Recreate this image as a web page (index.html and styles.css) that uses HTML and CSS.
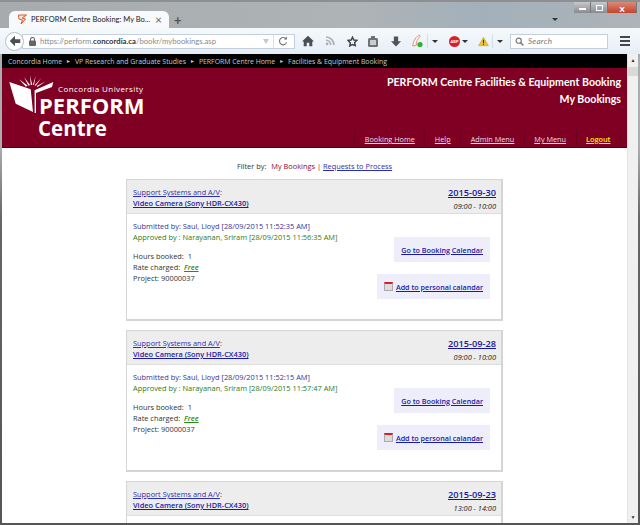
FILE: index.html
```html
<!DOCTYPE html>
<html lang="en">
<head>
<meta charset="utf-8">
<title>PERFORM Centre Booking</title>
<link rel="stylesheet" href="styles.css">
</head>
<body>
<div class="window">
  <div class="titlebar">
    <div class="tab">
      <svg class="favicon" width="9" height="11" viewBox="0 0 9 11"><path d="M.5 1h8L4 4l3.500 1L3 10l1.500-4L1 5z" fill="#fbe9d8" stroke="#d9562b" stroke-width="1"/></svg>
      <span class="tab-title">PERFORM Centre Booking: My Bo...</span>
      <span class="tab-close">×</span>
    </div>
    <span class="newtab">+</span>
    <span class="tabs-arrow"></span>
    <div class="winbtns">
      <span class="winbtn"><i class="min"></i></span>
      <span class="winbtn"><i class="max"></i></span>
      <span class="winbtn close">x</span>
    </div>
  </div>
  <div class="navbar">
    <span class="back">
      <svg width="12" height="12" viewBox="0 0 16 16"><path d="M8 1 1 8l7 7v-4.500h7v-5H8z" fill="#4a4f57"/></svg>
    </span>
    <div class="urlbar">
      <svg width="7" height="9" viewBox="0 0 7 9"><rect y="3.500" width="7" height="5.500" rx="1" fill="#666"/><path d="M1.500 4V2.500a2 2 0 0 1 4 0V4" fill="none" stroke="#666" stroke-width="1.100"/></svg>
      <span class="url">https://perform.<b>concordia.ca</b>/bookr/mybookings.asp</span>
      <span class="url-drop"></span>
      <span class="url-sep"></span>
      <svg width="10" height="10" viewBox="0 0 11 11"><path d="M9 3.500A4 4 0 1 0 9.400 7" fill="none" stroke="#777" stroke-width="1.300"/><path d="M6.500 3.800h3.300V.5z" fill="#777"/></svg>
    </div>
    <svg class="tool t-home" width="12" height="12" viewBox="0 0 14 14"><path d="M7 1 0 7.500h2V13h3.500V9h3v4H12V7.500h2z" fill="#4a4f57"/></svg>
    <svg class="tool t-rss" width="10" height="10" viewBox="0 0 14 14"><circle cx="3" cy="11" r="2" fill="#a9adb2"/><path d="M1.500 6A6.500 6.500 0 0 1 8 12.500M1.500 1.500a11 11 0 0 1 11 11" fill="none" stroke="#a9adb2" stroke-width="2.200"/></svg>
    <svg class="tool t-star" width="11" height="11" viewBox="0 0 14 14"><path d="m7 1.500 1.700 3.600 3.900.5-2.900 2.700.8 3.900L7 10.800l-3.500 1.900.8-3.900L1.400 5.600l3.900-.5z" fill="none" stroke="#3d4249" stroke-width="1.800"/></svg>
    <svg class="tool t-clip" width="10" height="11" viewBox="0 0 10 11"><rect y="2" width="10" height="9" rx="1.500" fill="#6d7277"/><rect x="2" y="4" width="6" height="5" fill="#c9cdd0"/><rect x="3" width="4" height="3" fill="#6d7277"/></svg>
    <svg class="tool t-down" width="10" height="11" viewBox="0 0 14 14"><path d="M4 0h6v6.500h4L7 14 0 6.500h4z" fill="#4f545b"/></svg>
    <svg class="tool t-leaf" width="11" height="14" viewBox="0 0 11 14"><path d="M7.500 1C4.500 2 1 7 .8 12l3.700-.8C3.500 8.500 6 4.500 8 2.500z" fill="#fff3ef" stroke="#e8907c" stroke-width="1"/><circle cx="8" cy="10.500" r="2.600" fill="#27b52f"/></svg>
    <span class="sep"></span>
    <span class="drop d-leaf"></span>
    <span class="abp">ABP</span>
    <span class="drop d-abp"></span>
    <svg class="tool t-warn" width="11" height="11" viewBox="0 0 16 14"><path d="M8 1 15 13H1z" fill="#f4c430" stroke="#c9a227"/><rect x="7.200" y="4.500" width="1.600" height="5" fill="#333"/><rect x="7.200" y="10.300" width="1.600" height="1.600" fill="#333"/></svg>
    <span class="sep s-warn"></span>
    <span class="drop d-warn"></span>
    <div class="search">
      <svg width="9" height="9" viewBox="0 0 11 11"><circle cx="4.500" cy="4.500" r="3.200" fill="none" stroke="#777" stroke-width="1.400"/><path d="m7 7 3.300 3.300" stroke="#777" stroke-width="1.800"/></svg>
      <span>Search</span>
    </div>
    <span class="burger"><i></i><i></i><i></i></span>
  </div>
  <div class="viewport">
    <div class="page">
      <div class="crumbs">
        <span>Concordia Home</span><span class="arr">►</span><span>VP Research and Graduate Studies</span><span class="arr">►</span><span>PERFORM Centre Home</span><span class="arr">►</span><span>Facilities &amp; Equipment Booking</span>
      </div>
      <header class="banner">
        <div class="logo">
          <svg class="logo-mark" width="46" height="40" viewBox="0 0 46 40">
            <path d="M1.300 8 22.700 15.300 25 38 7.700 29.700z" fill="#fff"/>
            <path d="M26.600 16.300 45.300 8 44 13 28 19V39h-1.400z" fill="#fff"/>
            <path d="M11 5.300 19.500 11.500 18 12.800zM16 3 22 11 20.500 11.800zM22 1.300 24.200 10.800 22.800 11zM27.700 2 26 11 24.900 10.800zM33.300 4 27.800 11.800 26.700 11.200zM37.700 7.300 29.500 13 28.800 12z" fill="#fff"/>
          </svg>
          <div class="logo-text">
            <div class="uni">Concordia University</div>
            <div class="perform">PERFORM</div>
            <div class="centre">Centre</div>
          </div>
        </div>
        <div class="banner-right">
          <h1>PERFORM Centre Facilities &amp; Equipment Booking</h1>
          <h2>My Bookings</h2>
          <nav class="menu">
            <a>Booking Home</a><a>Help</a><a>Admin Menu</a><a>My Menu</a><a class="logout">Logout</a>
          </nav>
        </div>
      </header>
      <p class="filter">Filter by: <span class="current">My Bookings</span> <span class="pipe">|</span> <a>Requests to Process</a></p>

      <section class="card">
        <div class="card-head">
          <div class="res"><a>Support Systems and A/V</a>:<br><a class="strong">Video Camera (Sony HDR-CX430)</a></div>
          <div class="when"><a>2015-09-30</a><em>09:00 - 10:00</em></div>
        </div>
        <div class="card-body">
          <div class="info">
            <div class="sub">Submitted by: Saul, Lloyd [28/09/2015 11:52:35 AM]</div>
            <div class="app">Approved by : Narayanan, Sriram [28/09/2015 11:56:35 AM]</div>
            <div class="meta">Hours booked:&nbsp; 1</div>
            <div>Rate charged:&nbsp; <a class="free">Free</a></div>
            <div>Project: 90000037</div>
          </div>
          <div class="actions">
            <a class="act">Go to Booking Calendar</a>
            <a class="act"><span class="cal"></span>Add to personal calandar</a>
          </div>
        </div>
      </section>

      <section class="card">
        <div class="card-head">
          <div class="res"><a>Support Systems and A/V</a>:<br><a class="strong">Video Camera (Sony HDR-CX430)</a></div>
          <div class="when"><a>2015-09-28</a><em>09:00 - 10:00</em></div>
        </div>
        <div class="card-body">
          <div class="info">
            <div class="sub">Submitted by: Saul, Lloyd [28/09/2015 11:52:15 AM]</div>
            <div class="app">Approved by : Narayanan, Sriram [28/09/2015 11:57:47 AM]</div>
            <div class="meta">Hours booked:&nbsp; 1</div>
            <div>Rate charged:&nbsp; <a class="free">Free</a></div>
            <div>Project: 90000037</div>
          </div>
          <div class="actions">
            <a class="act">Go to Booking Calendar</a>
            <a class="act"><span class="cal"></span>Add to personal calandar</a>
          </div>
        </div>
      </section>

      <section class="card">
        <div class="card-head">
          <div class="res"><a>Support Systems and A/V</a>:<br><a class="strong">Video Camera (Sony HDR-CX430)</a></div>
          <div class="when"><a>2015-09-23</a><em>13:00 - 14:00</em></div>
        </div>
      </section>
    </div>
    <div class="scrollbar">
      <span class="sb-btn">▲</span>
      <span class="sb-thumb"></span>
      <span class="sb-btn sb-end">▼</span>
    </div>
  </div>
</div>
</body>
</html>
```
FILE: styles.css
```css
* { box-sizing: border-box; }
html, body { margin: 0; height: 100%; overflow: hidden; }
body { background: #555; font-family: Lato, "Open Sans", sans-serif; }
a { cursor: pointer; }
.window { width: 640px; height: 525px; display: flex; flex-direction: column; border-top: 2px solid #8d9092; background: #a7adb1; }
.titlebar { height: 26px; padding: 9px 0 0 9px; display: flex; align-items: flex-start; position: relative; flex: none; background: linear-gradient(90deg, #a7abad, #aeb3b6 55%, #a3b0ba 75%, #adb3b8); }
.tab { width: 160px; height: 17px; background: #f7f9fb; border-radius: 6px 6px 0 0; display: flex; align-items: center; padding: 0 7px 0 9px; font-size: 7.500px; color: #222; flex: none; }
.favicon { flex: none; margin-right: 4px; }
.tab-title { flex: 1; white-space: nowrap; overflow: hidden; }
.tab-close { font-size: 12px; color: #666; line-height: 1; }
.newtab { margin-left: 5px; font-size: 13px; line-height: 18px; font-weight: 700; color: #555; }
.tabs-arrow { position: absolute; left: 552px; top: 16px; border: 3px solid transparent; border-top: 3px solid #333; border-bottom: 0; }
.winbtns { position: absolute; top: 0; right: 3px; display: flex; height: 11px; }
.winbtn { width: 17px; height: 11px; background: linear-gradient(#c5c9cc, #888c90); border-right: 1px solid #777; display: flex; align-items: center; justify-content: center; }
.winbtn .min { width: 7px; height: 2px; background: #fff; margin-top: 3px; }
.winbtn .max { width: 7px; height: 6px; border: 1px solid #fff; }
.winbtn.close { width: 29px; background: linear-gradient(#d98a78, #c4432c); color: #fff; font-size: 10px; font-weight: 700; line-height: 1; }
.navbar { height: 26px; flex: none; background: linear-gradient(#f5f9fc, #e6eef5); display: flex; align-items: center; padding: 0 0 0 5px; }
.back { width: 19px; height: 19px; border-radius: 50%; background: #fff; border: 1px solid #b6c0ca; display: flex; align-items: center; justify-content: center; flex: none; position: relative; z-index: 1; }
.urlbar { width: 273px; height: 15px; margin-left: -2px; background: #fff; border: 1px solid #c3d0dc; display: flex; align-items: center; padding: 0 6px 0 6px; flex: none; }
.url { margin-left: 4px; flex: 1; font-size: 7.700px; color: #8b8b8b; white-space: nowrap; }
.url b { color: #333; font-weight: 700; }
.url-drop { border: 3px solid transparent; border-top: 5px solid #c5c8cb; border-bottom: 0; margin-right: 4px; }
.url-sep { width: 1px; height: 13px; background: #dcdfe2; margin-right: 4px; }
.tool { flex: none; }
.t-home { margin-left: 7px; }
.t-rss { margin-left: 11px; }
.t-star { margin-left: 12px; }
.t-clip { margin-left: 10px; }
.t-down { margin-left: 13px; }
.t-leaf { margin-left: 11px; }
.sep { width: 1px; height: 14px; background: #d4dde5; margin-left: 4px; flex: none; }
.drop { border: 3px solid transparent; border-top: 3px solid #333; border-bottom: 0; flex: none; }
.d-leaf { margin-left: 4px; }
.abp { width: 11px; height: 11px; margin-left: 11px; background: #d7202a; border-radius: 50%; color: #fff; font-size: 4px; font-weight: 700; line-height: 11px; text-align: center; flex: none; }
.d-abp { margin-left: 2px; }
.t-warn { margin-left: 10px; }
.s-warn { margin-left: 3px; }
.d-warn { margin-left: 4px; }
.search { width: 98px; height: 15px; margin-left: 7px; background: #fff; border: 1px solid #c3d0dc; display: flex; align-items: center; padding-left: 4px; gap: 4px; font-size: 8px; letter-spacing: .3px; font-style: italic; color: #777; flex: none; }
.burger { margin-left: 12px; width: 10px; display: flex; flex-direction: column; gap: 2px; flex: none; }
.burger i { height: 2px; background: #42474d; }
.viewport { flex: 1; display: flex; padding: 0 2px 2px 2px; min-height: 0; overflow: hidden; background: linear-gradient(#a9adb0 20%, #666 35%, #555); }
.page { flex: 1; min-width: 0; background: #fff; font-family: "Open Sans", "Noto Sans", sans-serif; font-size: 7.400px; color: #333; overflow: hidden; }
.crumbs { height: 14px; background: #000; color: #c8c8c8; display: flex; align-items: center; padding-left: 6px; font-size: 6.900px; white-space: nowrap; gap: 4px; }
.arr { font-size: 5px; }
.banner { height: 80px; background: #7f0022; display: flex; justify-content: space-between; border-bottom: 1px solid #400012; }
.logo { position: relative; margin: 6px 0 0 6px; color: #fff; width: 140px; flex: none; }
.logo-mark { position: absolute; left: 0; top: 0; }
.logo-text { padding-left: 31px; }
.uni { font-size: 8px; letter-spacing: .4px; padding: 9px 0 0 19px; line-height: 11px; white-space: nowrap; }
.perform { font-size: 22px; font-weight: 700; line-height: 21px; white-space: nowrap; margin-top: 1px; }
.centre { font-size: 20.500px; font-weight: 700; line-height: 21px; margin-top: 1.500px; margin-left: -1px; }
.banner-right { padding: 6px 6px 0 0; text-align: right; color: #fff; display: flex; flex-direction: column; align-items: flex-end; }
h1, h2 { margin: 0; font-family: Lato, "Open Sans", sans-serif; font-size: 10.600px; font-weight: 700; line-height: 16.500px; white-space: nowrap; }
.menu { margin-top: 23px; display: flex; font-size: 7.300px; }
.menu a { color: #f3dfe4; text-decoration: underline; padding: 0 9.500px; line-height: 18px; border-left: 1px solid #6d001c; white-space: nowrap; }
.menu .logout { color: #ffee00; font-weight: 600; border-right: 1px solid #6d001c; }
.filter { margin: 12px 0 7px; text-align: center; font-size: 7.400px; line-height: 12px; color: #333; }
.filter .current { color: #8a1034; margin-left: 3px; }
.filter .pipe { color: #8a1034; }
.filter a { color: #2d2db3; text-decoration: underline; }
.card { width: 377px; margin: 0 0 9px 124px; height: 142px; border: 1px solid #d5d5d5; border-right-width: 2px; border-bottom-width: 2px; background: #fff; }
.card-head { height: 34px; background: #ededed; border-bottom: 1px solid #ddd; display: flex; justify-content: space-between; padding: 6px 5px 0 6px; }
.res { line-height: 11px; color: #333; margin-top: 1px; }
.res a { color: #2d2db3; text-decoration: underline; }
.res .strong { font-weight: 600; color: #1a1aa8; }
.when { text-align: right; }
.when a { display: block; font-size: 9.200px; font-weight: 600; color: #15159f; text-decoration: underline; line-height: 13px; }
.when em { display: block; margin-top: 1px; font-size: 7.400px; line-height: 12px; color: #222; }
.card-body { display: flex; justify-content: space-between; padding: 7px 11px 0 6px; }
.info { line-height: 10.700px; white-space: nowrap; color: #333; }
.sub { color: #33338f; }
.app { color: #2c7a16; }
.meta { margin-top: 9px; }
.free { color: #2c8a16; font-style: italic; font-weight: 600; text-decoration: underline; }
.actions { display: flex; flex-direction: column; align-items: flex-end; gap: 12px; padding-top: 16px; }
.act { height: 25px; padding: 0 7px; background: #eeeefa; color: #1a1aa8; font-size: 7.200px; font-weight: 600; text-decoration: underline; display: flex; align-items: center; white-space: nowrap; }
.cal { width: 9px; height: 9px; margin-right: 3px; border-top: 2px solid #d9202a; background: #dcdcdc; border-left: 1px solid #aaa; border-right: 1px solid #aaa; border-bottom: 1px solid #aaa; }
.scrollbar { width: 11px; flex: none; background: #f0f0f0; border-left: 1px solid #e3e3e3; display: flex; flex-direction: column; align-items: center; }
.sb-btn { font-size: 5px; height: 12px; line-height: 12px; color: #333; flex: none; }
.sb-thumb { width: 10px; height: 9px; margin-top: 1px; background: #d9d9d9; flex: none; }
.sb-end { margin-top: auto; }
```
